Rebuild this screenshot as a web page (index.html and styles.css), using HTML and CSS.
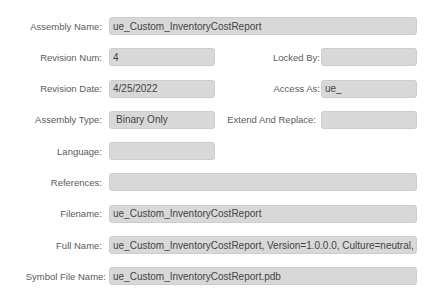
FILE: index.html
```html
<!DOCTYPE html>
<html lang="en">
<head>
    <meta charset="UTF-8">
    <meta name="viewport" content="width=device-width, initial-scale=1.0">
    <title>Assembly Properties</title>
    <link rel="stylesheet" href="styles.css">
</head>
<body>
    <form class="assembly-form">
        <label class="lbl">Assembly Name:</label>
        <input class="box wide" type="text" value="ue_Custom_InventoryCostReport" readonly>

        <label class="lbl">Revision Num:</label>
        <input class="box" type="text" value="4" readonly>
        <label class="lbl lbl-right">Locked By:</label>
        <input class="box" type="text" value="" readonly>

        <label class="lbl">Revision Date:</label>
        <input class="box" type="text" value="4/25/2022" readonly>
        <label class="lbl lbl-right">Access As:</label>
        <input class="box" type="text" value="ue_" readonly>

        <label class="lbl">Assembly Type:</label>
        <input class="box box-select" type="text" value="Binary Only" readonly>
        <label class="lbl lbl-right lbl-extend">Extend And Replace:</label>
        <input class="box" type="text" value="" readonly>

        <label class="lbl">Language:</label>
        <input class="box" type="text" value="" readonly>

        <label class="lbl">References:</label>
        <input class="box wide" type="text" value="" readonly>

        <label class="lbl">Filename:</label>
        <input class="box wide" type="text" value="ue_Custom_InventoryCostReport" readonly>

        <label class="lbl">Full Name:</label>
        <input class="box wide" type="text" value="ue_Custom_InventoryCostReport, Version=1.0.0.0, Culture=neutral, PublicKeyToken=null" readonly>

        <label class="lbl lbl-long">Symbol File Name:</label>
        <input class="box wide" type="text" value="ue_Custom_InventoryCostReport.pdb" readonly>
    </form>
</body>
</html>
```

FILE: styles.css
```css
body {
    margin: 0;
    background: #ffffff;
    font-family: "Liberation Sans", Arial, sans-serif;
}
.assembly-form {
    display: grid;
    grid-template-columns: 109px 106px 1fr 96px;
    grid-auto-rows: 18px;
    row-gap: 13.3px;
    width: 417px;
    padding-top: 17px;
}
.lbl {
    grid-column: 1;
    display: flex;
    align-items: center;
    justify-content: flex-end;
    padding-right: 7px;
    font-size: 9.5px;
    color: #5a5a5a;
    white-space: nowrap;
}
.lbl-right {
    grid-column: 3;
    padding-right: 1px;
}
.lbl-extend {
    padding-right: 5px;
}
.lbl-long {
    padding-right: 3px;
}
.box {
    box-sizing: border-box;
    width: 100%;
    height: 18px;
    margin: 0;
    padding: 0 3px;
    font-family: "Liberation Sans", Arial, sans-serif;
    font-size: 10px;
    color: #444;
    background-color: #d8d8d8;
    border: 1px solid #cdcdcd;
    border-radius: 3px;
    outline: none;
}
.box-select {
    padding-left: 6px;
}
.wide {
    grid-column: 2 / 5;
}
```
